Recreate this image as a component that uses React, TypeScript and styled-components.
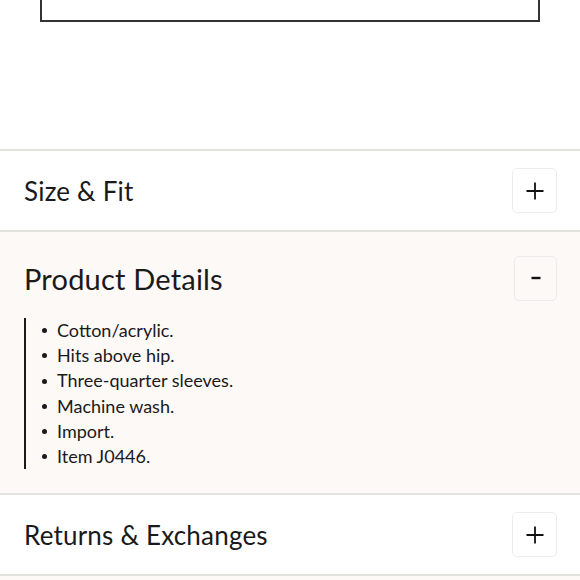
import styled, { createGlobalStyle } from "styled-components";

const GlobalStyle = createGlobalStyle`
  body {
    margin: 0;
    background: #ffffff;
    font-family: Lato, "Noto Sans", sans-serif;
    color: #1a1a1a;
  }
`;

const Page = styled.div`
  width: 580px;
  overflow: hidden;
`;

const Top = styled.div`
  padding: 0 40px;
  height: 149px;
`;

const AddBox = styled.div`
  height: 20px;
  border: 2px solid #333;
  border-top: none;
`;

const Section = styled.section<{ $open?: boolean }>`
  border-top: 2px solid #e4e2df;
  background: ${(p) => (p.$open ? "#fcf9f6" : "#ffffff")};
`;

const Header = styled.div<{ $open?: boolean }>`
  height: ${(p) => (p.$open ? "86px" : "79px")};
  padding: ${(p) => (p.$open ? "6px 23px 0 24px" : "0 23px 0 24px")};
  box-sizing: border-box;
  display: flex;
  align-items: center;
  justify-content: space-between;
`;

const Title = styled.h2<{ $open?: boolean }>`
  margin: 0;
  font-size: ${(p) => (p.$open ? "29px" : "26px")};
  font-weight: 400;
  letter-spacing: 0.2px;
`;

const Toggle = styled.button<{ $narrow?: boolean }>`
  width: ${(p) => (p.$narrow ? "43px" : "45px")};
  height: 45px;
  border: 1px solid #ececec;
  border-radius: 5px;
  background: transparent;
  color: #111;
  display: flex;
  align-items: center;
  justify-content: center;
  padding: 0;
`;

const Body = styled.div`
  padding: 0 24px 24px 24px;
`;

const List = styled.ul`
  margin: 0;
  padding: 0 0 0 16px;
  border-left: 2px solid #1a1a1a;
  list-style: none;
`;

const Item = styled.li`
  font-size: 18px;
  line-height: 25.2px;
  display: flex;
  align-items: center;
  &::before {
    content: "";
    width: 5px;
    height: 5px;
    border-radius: 50%;
    background: #1a1a1a;
    margin-right: 10px;
    flex-shrink: 0;
  }
`;

const details = [
  "Cotton/acrylic.",
  "Hits above hip.",
  "Three-quarter sleeves.",
  "Machine wash.",
  "Import.",
  "Item J0446.",
];

function PlusIcon() {
  return (
    <svg width="18" height="18" viewBox="0 0 18 18">
      <path d="M9 0.5V17.5M0.5 9H17.5" stroke="#111" strokeWidth="1.8" fill="none" />
    </svg>
  );
}

function MinusIcon() {
  return (
    <svg width="10" height="4" viewBox="0 0 10 4">
      <path d="M0.5 2H9.5" stroke="#111" strokeWidth="2.4" fill="none" />
    </svg>
  );
}

export default function App() {
  return (
    <Page>
      <GlobalStyle />
      <Top>
        <AddBox />
      </Top>
      <Section>
        <Header>
          <Title>Size &amp; Fit</Title>
          <Toggle aria-label="Expand">
            <PlusIcon />
          </Toggle>
        </Header>
      </Section>
      <Section $open>
        <Header $open>
          <Title $open>Product Details</Title>
          <Toggle $narrow aria-label="Collapse">
            <MinusIcon />
          </Toggle>
        </Header>
        <Body>
          <List>
            {details.map((d) => (
              <Item key={d}>{d}</Item>
            ))}
          </List>
        </Body>
      </Section>
      <Section>
        <Header>
          <Title>Returns &amp; Exchanges</Title>
          <Toggle aria-label="Expand">
            <PlusIcon />
          </Toggle>
        </Header>
      </Section>
      <Section $open>
        <Header />
      </Section>
    </Page>
  );
}
